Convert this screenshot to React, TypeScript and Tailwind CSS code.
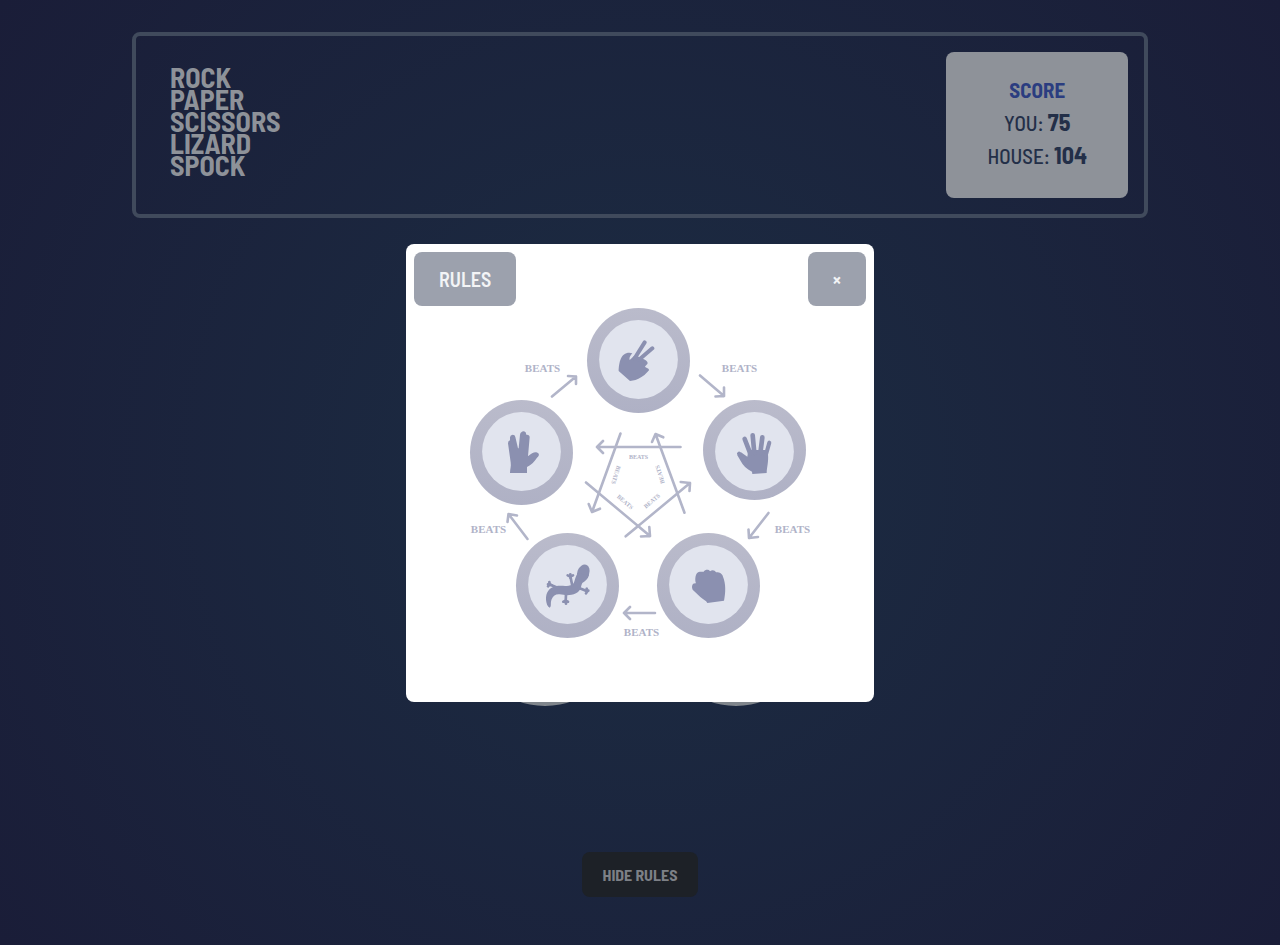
import { useState } from "react";

const TITLE = ["Rock", "Paper", "Scissors", "Lizard", "Spock"];

const BADGES = [
  { id: "scissors", cx: 638.5, cy: 360.5, ry: 52.5, iy: 359.5 },
  { id: "spock", cx: 521.5, cy: 452.5, ry: 52.5, iy: 451.5 },
  { id: "paper", cx: 754.5, cy: 450, ry: 50, iy: 451.5 },
  { id: "lizard", cx: 567.5, cy: 585.5, ry: 52.5, iy: 584.5 },
  { id: "rock", cx: 708.5, cy: 585.5, ry: 52.5, iy: 584.5 },
];

const ARROWS = [
  "M552 396.5L576 376.5M568 376L576 376.5L576 384",
  "M700 375.5L724 396M724 387.5L724 396L715.5 396.5",
  "M527.5 539L508.5 514M517 515.5L508.5 514L507.5 522",
  "M768.5 513L749 538M748.5 529.5L749 538L758 537",
  "M655 613L624 613M630 607L624 613L630 619",
  "M680.5 447L597 447M603 441L597 447L603 453",
  "M620.5 433.5L592 512M588.7 504L592 512L600 508.7",
  "M684.5 512.7L655.5 434M652 442L655.5 434L663.3 437.3",
  "M586 482.5L650 536M649.3 527L650 536L641 536.5",
  "M625.7 536.3L690 483M680.7 482L690 483L689.5 491",
];

const OUTER_LABELS = [
  [542.5, 372],
  [739.5, 372],
  [488.5, 533],
  [792.5, 533],
  [641.5, 636],
];

const INNER_LABELS = [
  [638.5, 457, 0],
  [616, 475, 108],
  [660, 474.5, -108],
  [625, 502, 41],
  [652, 501, -41],
];

function RulesDiagram() {
  return (
    <svg viewBox="464 306 352 340" className="mx-auto block w-full max-w-[352px]" role="img" aria-label="Which pick beats which">
      <defs>
        <linearGradient id="ring" x1="0" y1="0" x2="0" y2="1">
          <stop offset="0" stopColor="#babbcb" />
          <stop offset="1" stopColor="#afb1c5" />
        </linearGradient>
      </defs>
      {BADGES.map((b) => (
        <g key={b.id}>
          <ellipse cx={b.cx} cy={b.cy} rx={51.5} ry={b.ry} fill="url(#ring)" />
          <circle cx={b.cx} cy={b.iy} r={39.4} fill="#e1e4ee" />
        </g>
      ))}

      <g fill="#8b90b0" stroke="#8b90b0" strokeWidth="0" strokeLinecap="round" strokeLinejoin="round">
        {/* scissors */}
        <g transform="translate(580 300) scale(.33333)">
          <path d="M116 213C117 188 122 158 148 158L157 160C150 168 147 174 149 180L162 168L176 170L188 176C195 179 203 183 203 189C203 194 197 195 195 200C199 204 208 205 207 211C196 224 180 240 150 243Z" />
          <path d="M164 175L194 127M176 180L217 145" strokeWidth="12" />
        </g>
        {/* spock */}
        <g transform="translate(465 395) scale(.33333)">
          <path d="M135 234C135 222 139 215 137 202L129 145Q129 138 135 136V127Q136 119 143 119Q150 119 151 126L159 160H161L165 119Q166 113 169 112Q175 105 182 112L184 119Q194 118 194 127L189 184C200 175 206 171 214 172C225 175 223 183 216 188C207 201 199 209 186 216V234Z" />
        </g>
        {/* paper */}
        <g transform="translate(695 395) scale(.33333)">
          <path d="M127 181L138 172L157 185L160 165L212 165L219 178C221 200 216 215 215 234L172 237L171 230C155 222 143 211 137 198Z" />
          <path d="M149 132L166 176M173 121L178 174M202 127L196 174" strokeWidth="14" />
          <path d="M132 176L155 203M223 143L212 182" strokeWidth="12" />
        </g>
        {/* lizard */}
        <g transform="translate(510 525) scale(.33333)">
          <ellipse cx="220" cy="143" rx="18" ry="25" transform="rotate(20 220 143)" />
          <path d="M203 145C192 162 196 173 187 179C170 186 155 180 136 184C117 188 107 204 108 224C109 235 112 244 119 248C126 243 120 235 125 223C130 212 137 207 149 208C165 211 181 213 198 205C214 197 212 183 217 174C226 168 234 162 237 150Z" />
          <path d="M187 183L181 153M146 190L118 178M168 207L167 232M205 188L232 199" fill="none" strokeWidth="8" />
          <path d="M173 151L181 155L189 151M181 148V158M114 184L119 178L118 171M114 178L124 180M160 230L167 227L174 230M168 228V236M228 205L232 198L230 191M228 198L235 197" fill="none" strokeWidth="8" />
        </g>
        {/* rock */}
        <g transform="translate(650 525) scale(.33333)">
          <path d="M128 194C124 185 126 173 138 175C134 166 135 140 149 140L161 140C166 133 176 133 180 139C188 133 195 137 198 142C206 141 217 145 219 155C228 177 227 202 222 227L172 234C169 227 158 222 151 216Z" />
        </g>
      </g>

      <g fill="none" stroke="#b2b5c9" strokeWidth="2.6" strokeLinecap="round" strokeLinejoin="round">
        {ARROWS.map((d) => (
          <path key={d} d={d} />
        ))}
      </g>

      <g fill="#b0b3c8" textAnchor="middle" className="font-['Liberation_Serif',serif] font-bold">
        {OUTER_LABELS.map(([x, y]) => (
          <text key={`${x}-${y}`} x={x} y={y} className="text-[11px]">
            BEATS
          </text>
        ))}
        {INNER_LABELS.map(([x, y, angle]) => (
          <text key={`${x}-${y}`} y="2" transform={`translate(${x} ${y}) rotate(${angle})`} className="text-[6px]">
            BEATS
          </text>
        ))}
      </g>
    </svg>
  );
}

export default function App() {
  const [open, setOpen] = useState(true);

  return (
    <div className="flex min-h-screen flex-col items-center bg-[radial-gradient(circle_at_center,#1c2d43,#1a1d38)] px-8 pt-8 pb-12 font-['Barlow_Semi_Condensed','Roboto_Condensed',sans-serif] uppercase">
      <header className="flex w-full max-w-[1016px] items-center justify-between rounded-lg border-4 border-[#404a5c] p-4">
        <h1 className="pb-2 pl-[18px] text-[28px] leading-[22px] font-bold text-[#8e9299]">
          {TITLE.map((word) => (
            <span key={word} className="block">
              {word}
            </span>
          ))}
        </h1>
        <section className="rounded-lg bg-[#8e9299] px-[41px] pt-[22px] pb-[26px] text-center text-[21px] leading-8 font-medium text-[#232f48]">
          <h2 className="font-bold text-[#2b3d80]">Score</h2>
          <p>
            You: <span className="text-2xl leading-8 font-bold">75</span>
          </p>
          <p>
            House: <span className="text-2xl leading-8 font-bold">104</span>
          </p>
        </section>
      </header>

      <main className="mt-[334px] mb-auto flex gap-[37px]">
        <button type="button" aria-label="Lizard" className="size-[154px] rounded-full bg-[#80868c]" />
        <button type="button" aria-label="Rock" className="size-[154px] rounded-full bg-[#80868c]" />
      </main>

      <button
        type="button"
        onClick={() => setOpen(!open)}
        className="rounded-lg bg-[#1d2127] px-[21px] py-[10px] text-base leading-[25px] font-bold text-[#7d8086] uppercase"
      >
        {open ? "Hide rules" : "Show rules"}
      </button>

      {open && (
        <div className="fixed inset-0 flex items-center justify-center">
          <div role="dialog" aria-label="Rules" className="w-full max-w-[468px] rounded-lg bg-white pb-14">
            <div className="flex justify-between px-2 pt-2 text-xl leading-8 font-semibold text-[#f3f4f6]">
              <h2 className="rounded-lg bg-[#9ca1ad] px-[25px] py-[11px]">Rules</h2>
              <button
                type="button"
                aria-label="Close"
                onClick={() => setOpen(false)}
                className="rounded-lg bg-[#9ca1ad] px-[25px] py-[11px]"
              >
                ×
              </button>
            </div>
            <RulesDiagram />
          </div>
        </div>
      )}
    </div>
  );
}
